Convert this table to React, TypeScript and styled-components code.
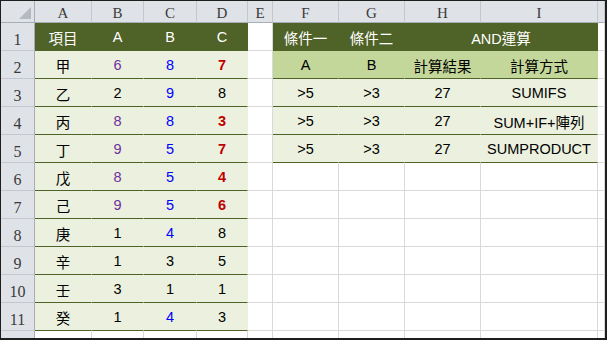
import styled, { createGlobalStyle } from 'styled-components';

const GlobalStyle = createGlobalStyle`
  html, body {
    margin: 0;
    padding: 0;
    background: #ffffff;
  }
`;

const DARK = '#4f6228';
const MID = '#c4d79b';
const LIGHT = '#ebf1de';
const GRID = '#d9d9d9';
const HEAD_BG = '#dfe3e8';
const HEAD_LINE = '#c4c8ce';
const HEAD_EDGE = '#a8aeb6';

const PURPLE = '#7030a0';
const BLUE = '#0000ff';
const RED = '#c00000';

const COLS = '34px 57px 52px 53px 51px 25px 66px 66px 76px 117px 7px';

const Frame = styled.div`
  width: 607px;
  height: 340px;
  box-sizing: border-box;
  border-left: 1px solid #1e1e1e;
  border-top: 1px solid #1e1e1e;
  border-right: 2px solid #1e1e1e;
  border-bottom: 2px solid #1e1e1e;
  overflow: hidden;
  display: flex;
  flex-direction: column;
`;

const Row = styled.div<{ $h: number }>`
  display: grid;
  grid-template-columns: ${COLS};
  height: ${({ $h }) => $h}px;
  flex: none;
  overflow: hidden;
`;

const Corner = styled.div`
  position: relative;
  background: ${HEAD_BG};
  border-right: 1px solid ${HEAD_EDGE};
  border-bottom: 1px solid ${HEAD_EDGE};
  box-sizing: border-box;

  &::after {
    content: '';
    position: absolute;
    right: 3px;
    bottom: 3px;
    width: 0;
    height: 0;
    border-left: 12px solid transparent;
    border-bottom: 12px solid #b6bac0;
  }
`;

const ColHead = styled.div`
  background: ${HEAD_BG};
  border-right: 1px solid ${HEAD_LINE};
  border-bottom: 1px solid ${HEAD_EDGE};
  box-sizing: border-box;
  display: flex;
  align-items: center;
  justify-content: center;
  padding-top: 3px;
  font-family: 'Liberation Serif', 'DejaVu Serif', serif;
  font-size: 15px;
  color: #3a3a3a;
`;

const RowHead = styled.div`
  background: ${HEAD_BG};
  border-right: 1px solid ${HEAD_EDGE};
  border-bottom: 1px solid ${HEAD_LINE};
  box-sizing: border-box;
  display: flex;
  align-items: center;
  justify-content: center;
  padding-top: 7px;
  font-family: 'Liberation Serif', 'DejaVu Serif', serif;
  font-size: 16px;
  color: #3a3a3a;
`;

const Cell = styled.div<{ $fill?: string; $color?: string; $bold?: boolean; $span?: number }>`
  grid-column: span ${({ $span }) => $span ?? 1};
  background: ${({ $fill }) => $fill ?? '#ffffff'};
  border-right: 1px solid ${({ $fill }) => $fill ?? GRID};
  border-bottom: 1px solid ${({ $fill }) => ($fill ? DARK : GRID)};
  box-sizing: border-box;
  display: flex;
  align-items: center;
  justify-content: center;
  padding-top: 1px;
  font-family: 'Liberation Sans', 'Noto Sans CJK TC', sans-serif;
  font-size: 14.5px;
  font-weight: ${({ $bold }) => ($bold ? 700 : 400)};
  color: ${({ $color }) => $color ?? '#000000'};
  white-space: nowrap;
`;

type Spec = { text?: string; fill?: string; color?: string; bold?: boolean; span?: number };

const head = (text: string, span?: number): Spec => ({ text, fill: DARK, color: '#ffffff', span });
const val = (text: string, color?: string): Spec => ({
  text,
  fill: LIGHT,
  color,
  bold: color === RED,
});

const items: [string, string, string | undefined, string, string | undefined, string, string | undefined][] = [
  ['甲', '6', PURPLE, '8', BLUE, '7', RED],
  ['乙', '2', undefined, '9', BLUE, '8', undefined],
  ['丙', '8', PURPLE, '8', BLUE, '3', RED],
  ['丁', '9', PURPLE, '5', BLUE, '7', RED],
  ['戊', '8', PURPLE, '5', BLUE, '4', RED],
  ['己', '9', PURPLE, '5', BLUE, '6', RED],
  ['庚', '1', undefined, '4', BLUE, '8', undefined],
  ['辛', '1', undefined, '3', undefined, '5', undefined],
  ['壬', '3', undefined, '1', undefined, '1', undefined],
  ['癸', '1', undefined, '4', BLUE, '3', undefined],
];

const leftTable: Spec[][] = [
  [head('項目'), head('A'), head('B'), head('C')],
  ...items.map(([n, b, bc, c, cc, d, dc]) => [val(n), val(b, bc), val(c, cc), val(d, dc)]),
];

const methods = ['SUMIFS', 'SUM+IF+陣列', 'SUMPRODUCT'];

const rightTable: Spec[][] = [
  [head('條件一'), head('條件二'), head('AND運算', 2)],
  ['A', 'B', '計算結果', '計算方式'].map((t) => ({ text: t, fill: MID })),
  ...methods.map((m) => ['>5', '>3', '27', m].map((t) => val(t))),
];

const empty = (n: number): Spec[] => Array.from({ length: n }, () => ({}));

const letters = ['A', 'B', 'C', 'D', 'E', 'F', 'G', 'H', 'I', ''];

export default function App() {
  const rows: Spec[][] = Array.from({ length: 11 }, (_, i) => [
    ...leftTable[i],
    {},
    ...(rightTable[i] ?? empty(4)),
    {},
  ]);

  return (
    <>
      <GlobalStyle />
      <Frame>
        <Row $h={22}>
          <Corner />
          {letters.map((l, i) => (
            <ColHead key={i}>{l}</ColHead>
          ))}
        </Row>
        {rows.map((cells, r) => (
          <Row $h={28} key={r}>
            <RowHead>{r + 1}</RowHead>
            {cells.map((c, i) => (
              <Cell key={i} $fill={c.fill} $color={c.color} $bold={c.bold} $span={c.span}>
                {c.text}
              </Cell>
            ))}
          </Row>
        ))}
        <Row $h={7}>
          <RowHead>12</RowHead>
          {empty(10).map((_, i) => (
            <Cell key={i} />
          ))}
        </Row>
      </Frame>
    </>
  );
}
